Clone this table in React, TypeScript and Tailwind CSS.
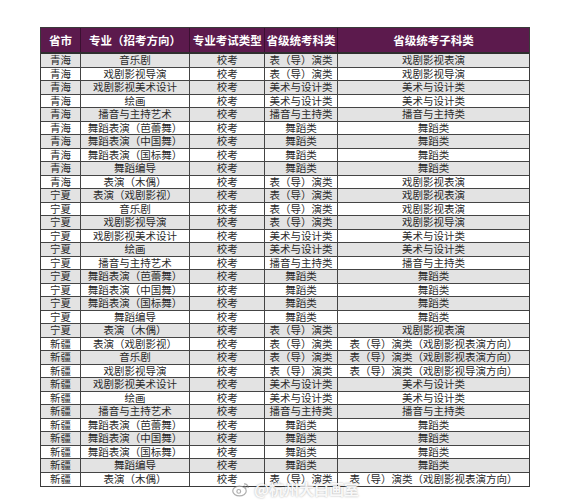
const HEAD = ["省市", "专业（招考方向）", "专业考试类型", "省级统考科类", "省级统考子科类"];

const BY = "表（导）演类";
const MS = "美术与设计类";
const BC = "播音与主持类";
const WD = "舞蹈类";

const block = (prov: string, withActing: boolean, xj: boolean) => {
  const rows: string[][] = [];
  if (withActing) rows.push([prov, "表演（戏剧影视）", "校考", BY, xj ? "表（导）演类（戏剧影视表演方向）" : "戏剧影视表演"]);
  rows.push([prov, "音乐剧", "校考", BY, xj ? "表（导）演类（戏剧影视表演方向）" : "戏剧影视表演"]);
  rows.push([prov, "戏剧影视导演", "校考", BY, xj ? "表（导）演类（戏剧影视导演方向）" : "戏剧影视导演"]);
  rows.push([prov, "戏剧影视美术设计", "校考", MS, MS]);
  rows.push([prov, "绘画", "校考", MS, MS]);
  rows.push([prov, "播音与主持艺术", "校考", BC, BC]);
  rows.push([prov, "舞蹈表演（芭蕾舞）", "校考", WD, WD]);
  rows.push([prov, "舞蹈表演（中国舞）", "校考", WD, WD]);
  rows.push([prov, "舞蹈表演（国标舞）", "校考", WD, WD]);
  rows.push([prov, "舞蹈编导", "校考", WD, WD]);
  rows.push([prov, "表演（木偶）", "校考", BY, xj ? "表（导）演类（戏剧影视表演方向）" : "戏剧影视表演"]);
  return rows;
};

const ROWS = [...block("青海", false, false), ...block("宁夏", true, false), ...block("新疆", true, true)];

const COLS = ["w-[40px]", "w-[110px]", "w-[75px]", "w-[73px]", "w-[192px]"];

export default function App() {
  return (
    <div className="w-[571px] h-[500px] bg-white pt-[27px] pl-[40px] relative" style={{ fontFamily: '"Noto Sans CJK SC", "Noto Sans", sans-serif' }}>
      <div className="w-[490px] border border-[#3a3a3a]">
        {/* header */}
        <div className="flex h-[26px] bg-[#5c1a4d] border-b-2 border-[#2e2e2e]">
          {HEAD.map((h, i) => (
            <div key={i} className={`${COLS[i]} flex items-center justify-center text-white font-bold text-[11.5px] leading-[14px] whitespace-nowrap ${i < 4 ? "border-r border-[#3a1030]" : ""}`}>
              {h}
            </div>
          ))}
        </div>
        {ROWS.map((r, ri) => (
          <div key={ri} className={`flex h-[13.5px] border-b border-[#444] last:border-b-0 ${ri % 2 === 0 ? "bg-[#e3e3e3]" : "bg-white"}`}>
            {r.map((c, ci) => (
              <div key={ci} className={`${COLS[ci]} flex items-center justify-center whitespace-nowrap text-[10.5px] leading-[12px] text-[#2a2a2a] ${ci < 4 ? "border-r border-[#444]" : ""}`}>
                {c}
              </div>
            ))}
          </div>
        ))}
      </div>
      {/* watermark */}
      <div className="absolute left-[232px] top-[478px] flex items-center gap-1 text-white/90 text-[15px] font-bold" style={{ textShadow: "0 0 2px rgba(0,0,0,0.35)" }}>
        <svg width="18" height="15" viewBox="0 0 24 20" fill="none" stroke="rgba(120,120,120,0.6)" strokeWidth="1.6">
          <ellipse cx="10" cy="12" rx="9" ry="6.5" fill="rgba(255,255,255,0.8)" />
          <circle cx="9" cy="12.5" r="2.5" />
          <path d="M16 2.5a5 5 0 0 1 5.5 5.5" />
          <path d="M15.5 5.5a2.5 2.5 0 0 1 3 3" />
        </svg>
        <span>@杭州大白画室</span>
      </div>
    </div>
  );
}
